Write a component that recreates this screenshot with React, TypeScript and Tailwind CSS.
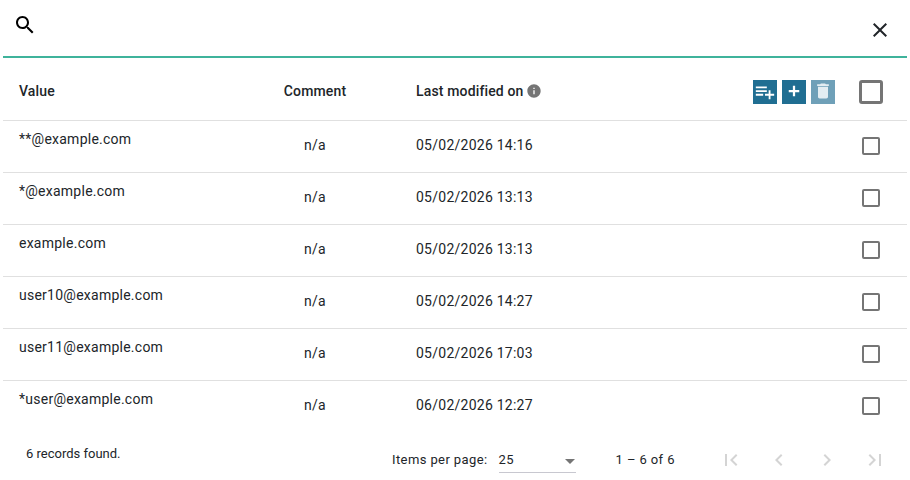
import React from 'react';

const rows = [
    { value: '**@example.com', modified: '05/02/2026 14:16' },
    { value: '*@example.com', modified: '05/02/2026 13:13' },
    { value: 'example.com', modified: '05/02/2026 13:13' },
    { value: 'user10@example.com', modified: '05/02/2026 14:27' },
    { value: 'user11@example.com', modified: '05/02/2026 17:03' },
    { value: '*user@example.com', modified: '06/02/2026 12:27' },
];

const MatIcon = ({ d, size = 24, className }: { d: string; size?: number; className?: string }) => (
    <svg width={size} height={size} viewBox="0 0 24 24" fill="currentColor" className={className}>
        <path d={d} />
    </svg>
);

const SEARCH =
    'M15.5 14h-.79l-.28-.27C15.41 12.59 16 11.11 16 9.5 16 5.91 13.09 3 9.5 3S3 5.91 3 9.5 5.91 16 9.5 16c1.61 0 3.09-.59 4.23-1.57l.27.28v.79l5 4.99L20.49 19l-4.99-5zm-6 0C7.01 14 5 11.99 5 9.5S7.01 5 9.5 5 14 7.01 14 9.5 11.99 14 9.5 14z';
const CLOSE =
    'M19 6.41 17.59 5 12 10.59 6.41 5 5 6.41 10.59 12 5 17.59 6.41 19 12 13.41 17.59 19 19 17.59 13.41 12z';
const PLAYLIST_ADD = 'M14 10H2v2h12v-2zm0-4H2v2h12V6zm4 8v-4h-2v4h-4v2h4v4h2v-4h4v-2h-4zM2 16h8v-2H2v2z';
const ADD = 'M19 13.5h-5.5V19h-3v-5.5H5v-3h5.5V5h3v5.5H19v3z';
const DELETE = 'M6 19c0 1.1.9 2 2 2h8c1.1 0 2-.9 2-2V7H6v12zM19 4h-3.5l-1-1h-5l-1 1H5v2h14V4z';
const INFO =
    'M12 2C6.48 2 2 6.48 2 12s4.48 10 10 10 10-4.48 10-10S17.52 2 12 2zm1 15h-2v-6h2v6zm0-8h-2V7h2v2z';
const FIRST = 'M18.41 16.59 13.82 12l4.59-4.59L17 6l-6 6 6 6zM6 6h2v12H6z';
const PREV = 'M15.41 7.41 14 6l-6 6 6 6 1.41-1.41L10.83 12z';
const NEXT = 'M10 6 8.59 7.41 13.17 12l-4.58 4.59L10 18l6-6z';
const LAST = 'M5.59 7.41 10.18 12l-4.59 4.59L7 18l6-6-6-6zM16 6h2v12h-2z';

const ActionButton = ({ d, size, disabled, className }: { d: string; size: number; disabled?: boolean; className?: string }) => (
    <button
        className={
            disabled
                ? 'flex size-6 items-center justify-center bg-[#6fa0b8] text-[#e3edf2]'
                : 'flex size-6 items-center justify-center bg-[#206e92] text-white'
        }
    >
        <MatIcon d={d} size={size} className={className} />
    </button>
);

export default function App() {
    return (
        <div className="h-[480px] w-[910px] overflow-hidden bg-white px-[3px] font-['Roboto',sans-serif] text-sm tracking-[0.25px] text-[#212529]">
            <div className="flex h-[58px] items-start justify-between border-b-2 border-[#3fb39b]">
                <MatIcon d={SEARCH} className="ml-[10px] mt-[13px] text-black" />
                <MatIcon d={CLOSE} className="mr-[15px] mt-[18px] text-[#212529]" />
            </div>

            <div className="flex h-[63px] items-start border-b border-[#e0e0e0] font-medium tracking-[0.15px]">
                <div className="w-[244px] pl-4 pt-[23px]">Value</div>
                <div className="w-[136px] pt-[23px] text-center">Comment</div>
                <div className="flex w-[370px] items-center gap-[2px] pl-[33px] pt-[23px]">
                    Last modified on
                    <MatIcon d={INFO} size={16} className="text-[#757575]" />
                </div>
                <div className="flex items-center gap-[5px] pt-[22px]">
                    <ActionButton d={PLAYLIST_ADD} size={22} />
                    <ActionButton d={ADD} size={18} className="mb-0.5" />
                    <ActionButton d={DELETE} size={20} className="mb-0.5" disabled />
                </div>
                <div className="ml-6 mt-[22px] size-6 rounded-[3px] border-[3px] border-[#757575]" />
            </div>

            {rows.map((row, index) => (
                <div
                    key={row.value}
                    className={
                        index < rows.length - 1
                            ? 'flex h-[52px] border-b border-[#e0e0e0]'
                            : 'flex h-[52px]'
                    }
                >
                    <div className="w-[244px] pl-4 pt-2">{row.value}</div>
                    <div className="w-[136px] pt-[14px] text-center">n/a</div>
                    <div className="flex-1 pl-[33px] pt-[14px]">{row.modified}</div>
                    <div className="mr-[27px] mt-4 size-[18px] rounded-[2px] border-2 border-[#757575]" />
                </div>
            ))}

            <div className="flex items-start text-[13px]">
                <div className="w-[389px] pl-[23px] pt-3 tracking-normal">6 records found.</div>
                <div className="flex items-start tracking-[0.4px]">
                    <span className="pt-[18px]">Items per page:</span>
                    <div className="ml-[11px] mt-2 flex h-[32px] w-[77px] items-end justify-between border-b border-[#c8c8d0] pb-[2px]">
                        <span>25</span>
                        <span className="mb-[6px] mr-px h-0 w-0 border-x-[5px] border-t-[5px] border-x-transparent border-t-[#757575]" />
                    </div>
                    <span className="ml-10 pt-[18px]">1 – 6 of 6</span>
                </div>
                <div className="ml-[44px] mt-[15px] flex gap-6 text-[#d4d4d4]">
                    <MatIcon d={FIRST} />
                    <MatIcon d={PREV} />
                    <MatIcon d={NEXT} />
                    <MatIcon d={LAST} />
                </div>
            </div>
        </div>
    );
}
